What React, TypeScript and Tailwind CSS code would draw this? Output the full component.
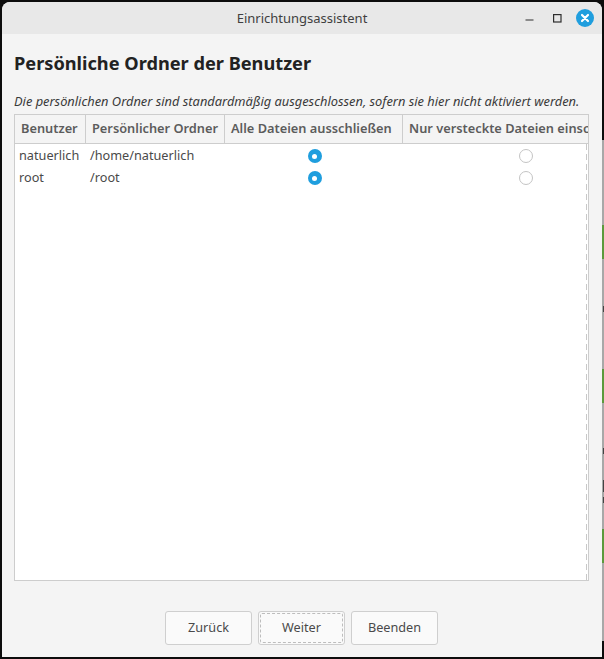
const font = { fontFamily: '"Noto Sans", sans-serif' }

function Radio({ on }: { on?: boolean }) {
  if (on) {
    return (
      <span className="flex h-[14px] w-[14px] items-center justify-center rounded-full bg-[#1f9ede]">
        <span className="h-[5px] w-[5px] rounded-full bg-white" />
      </span>
    )
  }
  return <span className="h-[14px] w-[14px] rounded-full border border-[#c4c4c4] bg-white" />
}

function HeaderCell({ label, className }: { label: string; className: string }) {
  return (
    <div className={`flex shrink-0 items-center overflow-hidden whitespace-nowrap border-r border-[#cdcdcd] pl-[6px] text-[12.8px] font-semibold text-[#5c5c5c] ${className}`}>
      {label}
    </div>
  )
}

function Row({ user, home }: { user: string; home: string }) {
  return (
    <div className="flex h-[22px] items-center text-[12.7px] text-[#4a4a4a]">
      <div className="w-[71px] shrink-0 pl-[4px]">{user}</div>
      <div className="w-[139px] shrink-0 pl-[4px]">{home}</div>
      <div className="flex w-[178px] shrink-0 justify-center pl-[1px]"><Radio on /></div>
      <div className="flex w-[246px] shrink-0 justify-center"><Radio /></div>
    </div>
  )
}

function FooterButton({ label, focused }: { label: string; focused?: boolean }) {
  return (
    <button className="flex h-[34px] w-[87px] items-center justify-center rounded-[3px] border border-[#cfcfcf] bg-[#fafafa] p-[1px] text-[12.7px] text-[#4a4a4a]">
      <span className={`flex h-full w-full items-center justify-center rounded-[2px] ${focused ? 'border border-dashed border-[#bdbdbd]' : ''}`}>
        {label}
      </span>
    </button>
  )
}

export default function App() {
  return (
    <div className="relative h-[659px] w-[604px] overflow-hidden bg-[#0c0c0c] pl-[2px] pt-[2px]" style={font}>
      {/* Fenster dahinter, rechter Rand */}
      <div className="absolute right-0 top-[140px] h-[501px] w-[2px] bg-[#a8a8a8]" />
      <div className="absolute right-0 top-[225px] h-[34px] w-[2px] bg-[#5c9a3c]" />
      <div className="absolute right-0 top-[369px] h-[34px] w-[2px] bg-[#5c9a3c]" />
      <div className="absolute right-0 top-[529px] h-[34px] w-[2px] bg-[#5c9a3c]" />
      <div className="absolute right-0 top-[306px] h-[6px] w-[1px] bg-[#444444]" />
      <div className="absolute right-0 top-[448px] h-[6px] w-[1px] bg-[#444444]" />
      <div className="absolute right-0 top-[480px] h-[12px] w-[1px] bg-[#444444]" />
      <div className="absolute right-0 top-[497px] h-[6px] w-[1px] bg-[#444444]" />

      <div className="relative flex h-[655px] w-[600px] flex-col overflow-hidden rounded-t-[8px] bg-[#f4f4f4]">
        <div className="relative flex h-[32px] shrink-0 items-center justify-center bg-[#e8e8e8] pt-[1px] text-[13px] text-[#3f3f3f]">
          Einrichtungsassistent
          <div className="absolute right-[8px] top-[7px] flex items-center">
            <svg width="9" height="10" viewBox="0 0 9 10" className="mr-[19px]">
              <path d="M0.5 7h8" stroke="#2e2e2e" strokeWidth="1.2" />
            </svg>
            <svg width="9" height="9" viewBox="0 0 9 9" className="mr-[14px]">
              <rect x="0.6" y="0.6" width="7.4" height="7.4" fill="none" stroke="#2e2e2e" strokeWidth="1.2" />
            </svg>
            <svg width="18" height="18" viewBox="0 0 18 18">
              <circle cx="9" cy="9" r="9" fill="#1f9ede" />
              <path d="M6 6l6 6M12 6l-6 6" stroke="#fff" strokeWidth="2.2" strokeLinecap="round" />
            </svg>
          </div>
        </div>

        <div className="flex min-h-0 flex-1 flex-col px-[12px]">
          <h1 className="mt-[16px] h-[26px] whitespace-nowrap text-[18.2px] font-bold leading-[26px] text-[#222222]">
            Persönliche Ordner der Benutzer
          </h1>
          <p className="mt-[16px] h-[18px] whitespace-nowrap text-[12.85px] italic leading-[18px] text-[#3a3a3a]">
            Die persönlichen Ordner sind standardmäßig ausgeschlossen, sofern sie hier nicht aktiviert werden.
          </p>

          <div className="relative mt-[4px] flex h-[467px] w-[575px] flex-col overflow-hidden border border-[#cdcdcd] bg-white">
            <div className="flex h-[29px] shrink-0 border-b border-[#cdcdcd] bg-[#f4f4f4]">
              <HeaderCell label="Benutzer" className="w-[71px]" />
              <HeaderCell label="Persönlicher Ordner" className="w-[139px]" />
              <HeaderCell label="Alle Dateien ausschließen" className="w-[178px]" />
              <HeaderCell label="Nur versteckte Dateien einschließen" className="w-[246px] border-r-0" />
            </div>
            <div className="pt-[1px]">
              <Row user="natuerlich" home="/home/natuerlich" />
              <Row user="root" home="/root" />
            </div>
            <div className="absolute bottom-0 right-[1px] top-[29px] w-px bg-[repeating-linear-gradient(to_bottom,#c8c8c8_0,#c8c8c8_6px,transparent_6px,transparent_10px)]" />
          </div>

          <div className="mt-[30px] flex justify-center gap-[6px] pr-[1px]">
            <FooterButton label="Zurück" />
            <FooterButton label="Weiter" focused />
            <FooterButton label="Beenden" />
          </div>
        </div>
      </div>
    </div>
  )
}
